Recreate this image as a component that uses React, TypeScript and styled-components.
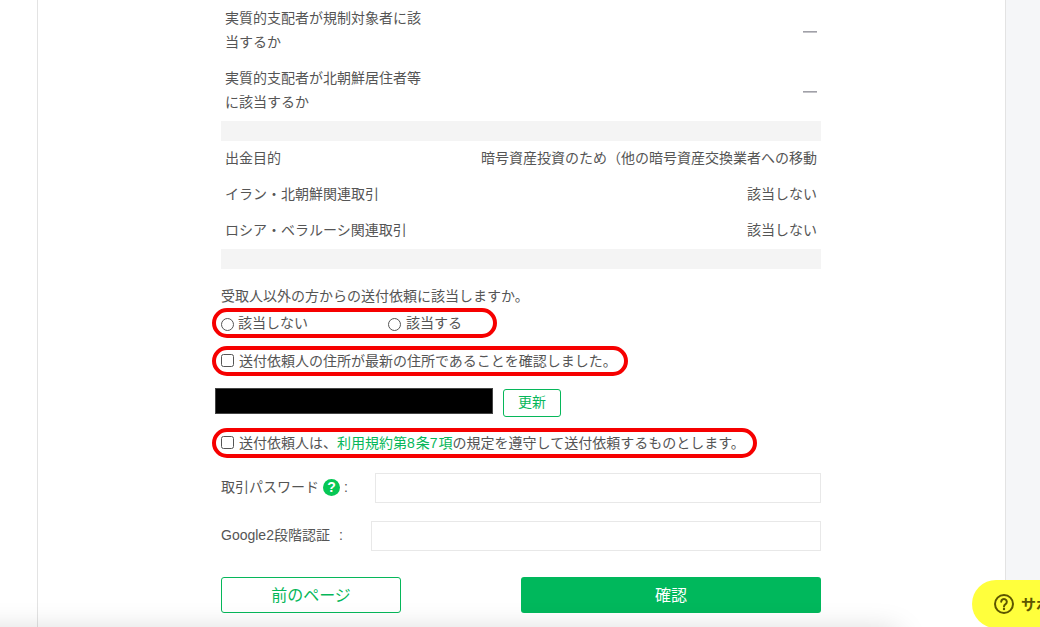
import React from "react";
import styled, { createGlobalStyle } from "styled-components";

const Global = createGlobalStyle`
  html, body { margin: 0; padding: 0; background: #fff; }
  *, *::before, *::after { box-sizing: border-box; }
`;

const Page = styled.div`
  position: relative;
  width: 1040px;
  height: 627px;
  overflow: hidden;
  display: flex;
  background: #fff;
  font-family: "Liberation Sans", "Noto Sans CJK JP", sans-serif;
  font-size: 14px;
  line-height: 24px;
  color: #555;
`;

const LeftGutter = styled.div`
  width: 37px;
  flex: none;
`;

const RightGutter = styled.div`
  flex: 1;
  background: #f5f6f8;
`;

const Panel = styled.main`
  width: 969px;
  flex: none;
  height: 627px;
  border-left: 1px solid #e3e3e3;
  border-right: 1px solid #e3e3e3;
  padding-left: 183px;
`;

const Column = styled.div`
  width: 600px;
  display: flex;
  flex-direction: column;
`;

const TallRow = styled.div`
  height: 60px;
  display: flex;
  align-items: center;
  justify-content: space-between;
  padding: 0 4px;
  &:first-child { margin-top: 1px; }
`;

const TallLabel = styled.div`
  width: 200px;
  margin-bottom: 3px;
`;

const Dash = styled.div`
  width: 14px;
  height: 1px;
  background: #a0a0a8;
  box-shadow: 0 1px 0 #c4c4c8;
`;

const Spacer = styled.div`
  height: 20px;
  background: #f4f4f4;
`;

const Row = styled.div`
  height: 36px;
  display: flex;
  align-items: center;
  justify-content: space-between;
  padding: 0 4px 3px;
`;

const Question = styled.div`
  margin-top: 15px;
  height: 24px;
`;

const OptionRow = styled.div<{ $top: number; $ringWidth: number }>`
  position: relative;
  height: 24px;
  margin-top: ${(p) => p.$top}px;
  display: flex;
  align-items: center;
  &::before {
    content: "";
    position: absolute;
    left: -9px;
    top: -3px;
    width: ${(p) => p.$ringWidth}px;
    height: 30px;
    border: 4px solid #f60000;
    border-radius: 15px;
    pointer-events: none;
  }
`;

const Option = styled.label<{ $width?: number; $gap: number }>`
  display: flex;
  align-items: center;
  gap: ${(p) => p.$gap}px;
  width: ${(p) => (p.$width ? `${p.$width}px` : "auto")};
  white-space: nowrap;
  margin-bottom: 1px;
`;

const Radio = styled.input.attrs({ type: "radio" })`
  appearance: none;
  width: 13px;
  height: 13px;
  margin: 3px 0 0;
  border: 1px solid #555;
  border-radius: 50%;
  background: #fff;
  flex: none;
`;

const Check = styled.input.attrs({ type: "checkbox" })`
  appearance: none;
  width: 13px;
  height: 13px;
  margin: 0;
  border: 1px solid #555;
  border-radius: 2.5px;
  background: #fff;
  flex: none;
`;

const TextLink = styled.a`
  color: #06b75a;
  text-decoration: none;
`;

const Digit = styled.span`
  letter-spacing: 1px;
`;

const AddressRow = styled.div`
  margin-top: 15px;
  margin-left: -6px;
  display: flex;
  align-items: flex-start;
  gap: 10px;
`;

const Redacted = styled.div`
  width: 278px;
  height: 26px;
  background: #000;
  box-shadow: inset 0 0 0 1px #444;
`;

const SmallButton = styled.button`
  width: 58px;
  height: 28px;
  margin-top: 1px;
  padding: 0 0 2px;
  border: 1px solid #06b75a;
  border-radius: 3px;
  background: #fff;
  color: #06b75a;
  font: inherit;
`;

const FieldRow = styled.div<{ $top: number; $inset: number }>`
  margin-top: ${(p) => p.$top}px;
  height: 30px;
  display: flex;
  align-items: center;
  gap: ${(p) => p.$inset}px;
  white-space: nowrap;
`;

const FieldLabel = styled.label`
  display: flex;
  align-items: center;
  margin-bottom: 3px;
`;

const HelpDot = styled.span`
  width: 17px;
  height: 17px;
  margin: 2px 3px 0 4px;
  border-radius: 50%;
  background: #06c755;
  color: #fff;
  font: 700 14px/17px "Liberation Sans", sans-serif;
  text-align: center;
`;

const Colon = styled.span<{ $gap: number }>`
  margin-left: ${(p) => p.$gap}px;
`;

const TextField = styled.input`
  flex: 1;
  min-width: 0;
  height: 30px;
  border: 1px solid #e8e8e8;
  background: #fff;
  outline: none;
`;

const Actions = styled.div`
  margin-top: 26px;
  display: flex;
  justify-content: space-between;
`;

const BackButton = styled.button`
  width: 180px;
  height: 36px;
  padding: 0 0 2px;
  border: 1px solid #06b75a;
  border-radius: 3px;
  background: #fff;
  color: #06b75a;
  font: 400 16px/24px "Noto Sans CJK JP", sans-serif;
`;

const ConfirmButton = styled.button`
  width: 300px;
  height: 36px;
  padding: 0 0 2px;
  border: none;
  border-radius: 3px;
  background: #00b85c;
  color: #fff;
  font: 400 16px/24px "Noto Sans CJK JP", sans-serif;
`;

const BottomShadow = styled.div`
  position: absolute;
  left: -40px;
  top: 640px;
  width: 930px;
  height: 30px;
  box-shadow: 0 0 30px 8px rgba(0, 0, 0, 0.18);
  pointer-events: none;
`;

const SupportButton = styled.button`
  position: absolute;
  left: 972px;
  top: 580px;
  width: 140px;
  height: 48px;
  display: flex;
  align-items: center;
  gap: 7px;
  padding: 0 0 0 22px;
  border: none;
  border-radius: 24px;
  background: #ffff3c;
  color: #5c5600;
  font: 700 15px/20px "Noto Sans CJK JP", sans-serif;
  white-space: nowrap;
`;

const SupportIcon = () => (
  <svg width="20" height="20" viewBox="0 0 20 20" fill="none" aria-hidden="true" style={{ flex: "none" }}>
    <circle cx="10" cy="10" r="9" stroke="#5c5600" strokeWidth="2" />
    <path d="M7.2 7.8a2.8 2.8 0 1 1 4.4 2.3c-1 .7-1.6 1.2-1.6 2.3" stroke="#5c5600" strokeWidth="2" strokeLinecap="round" />
    <circle cx="10" cy="15" r="1.2" fill="#5c5600" />
  </svg>
);

export default function App() {
  return (
    <Page>
      <Global />
      <LeftGutter />
      <Panel>
        <Column>
          <TallRow>
            <TallLabel>実質的支配者が規制対象者に該当するか</TallLabel>
            <Dash />
          </TallRow>
          <TallRow>
            <TallLabel>実質的支配者が北朝鮮居住者等に該当するか</TallLabel>
            <Dash />
          </TallRow>
          <Spacer />
          <Row>
            <span>出金目的</span>
            <span>暗号資産投資のため（他の暗号資産交換業者への移動</span>
          </Row>
          <Row>
            <span>イラン・北朝鮮関連取引</span>
            <span>該当しない</span>
          </Row>
          <Row>
            <span>ロシア・ベラルーシ関連取引</span>
            <span>該当しない</span>
          </Row>
          <Spacer />
          <Question>受取人以外の方からの送付依頼に該当しますか。</Question>
          <OptionRow $top={3} $ringWidth={285}>
            <Option $width={167} $gap={4}>
              <Radio name="q" />
              該当しない
            </Option>
            <Option $gap={5}>
              <Radio name="q" />
              該当する
            </Option>
          </OptionRow>
          <OptionRow $top={14} $ringWidth={416}>
            <Option $gap={5}>
              <Check />
              送付依頼人の住所が最新の住所であることを確認しました。
            </Option>
          </OptionRow>
          <AddressRow>
            <Redacted />
            <SmallButton>更新</SmallButton>
          </AddressRow>
          <OptionRow $top={14} $ringWidth={545}>
            <Option $gap={5}>
              <Check />
              <span>
                送付依頼人は、
                <TextLink href="#">
                  利用規約第<Digit>8</Digit>条<Digit>7</Digit>項
                </TextLink>
                の規定を遵守して送付依頼するものとします。
              </span>
            </Option>
          </OptionRow>
          <FieldRow $top={18} $inset={27}>
            <FieldLabel>
              取引パスワード
              <HelpDot>?</HelpDot>
              <Colon $gap={1}>:</Colon>
            </FieldLabel>
            <TextField />
          </FieldRow>
          <FieldRow $top={18} $inset={28}>
            <FieldLabel>
              Google2段階認証
              <Colon $gap={9}>:</Colon>
            </FieldLabel>
            <TextField />
          </FieldRow>
          <Actions>
            <BackButton>前のページ</BackButton>
            <ConfirmButton>確認</ConfirmButton>
          </Actions>
        </Column>
      </Panel>
      <RightGutter />
      <BottomShadow />
      <SupportButton>
        <SupportIcon />
        サポート
      </SupportButton>
    </Page>
  );
}
